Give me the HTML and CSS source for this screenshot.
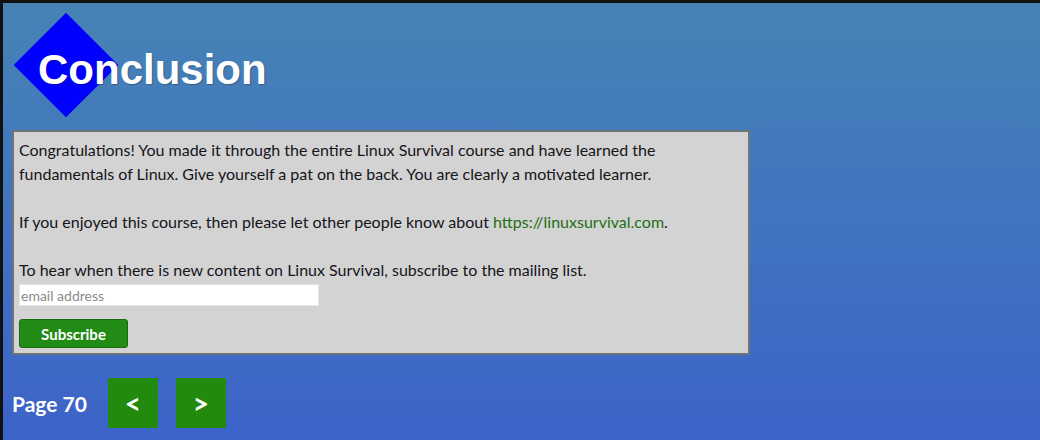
FILE: index.html
```html
<!DOCTYPE html>
<html>
<head>
<meta charset="utf-8">
<link rel="stylesheet" href="styles.css">
</head>
<body>
<div class="page">
  <header class="header">
    <h1 class="title">Conclusion</h1>
  </header>
  <section class="card">
    <p class="para">Congratulations! You made it through the entire Linux Survival course and have learned the fundamentals of Linux. Give yourself a pat on the back. You are clearly a motivated learner.</p>
    <p class="para">If you enjoyed this course, then please let other people know about <a class="link" href="#">https://linuxsurvival.com</a>.</p>
    <p class="para">To hear when there is new content on Linux Survival, subscribe to the mailing list.</p>
    <form class="signup">
      <input class="email" type="text" placeholder="email address">
      <button class="subscribe" type="button">Subscribe</button>
    </form>
  </section>
  <nav class="pager">
    <span class="pagenum">Page 70</span>
    <a class="navbtn" href="#">&lt;</a>
    <a class="navbtn" href="#">&gt;</a>
  </nav>
</div>
</body>
</html>
```
FILE: styles.css
```css
html, body {
  margin: 0;
  padding: 0;
  height: 100%;
}
body {
  background: #111;
  font-family: Lato, "Liberation Sans", sans-serif;
}
.page {
  box-sizing: border-box;
  margin-top: 3px;
  margin-left: 3px;
  height: 437px;
  background: linear-gradient(to bottom, #4683b5 0%, #3c63c9 100%);
  padding: 0 9px;
  display: flex;
  flex-direction: column;
}
.header {
  position: relative;
  height: 127px;
  display: flex;
  align-items: flex-start;
}
.header::before {
  content: "";
  position: absolute;
  left: 17px;
  top: 25px;
  width: 74px;
  height: 74px;
  background: #0000ff;
  transform: rotate(45deg);
}
.title {
  position: relative;
  margin: 0;
  padding: 46px 0 0 26px;
  font-family: "Liberation Sans", Arial, sans-serif;
  font-weight: bold;
  font-size: 42px;
  line-height: 1;
  color: #fff;
  text-shadow: 1px 1px 1px rgba(0,0,0,0.25);
}
.card {
  width: 738px;
  box-sizing: border-box;
  background: #d3d3d3;
  border: 2px solid #6e7478;
  padding: 6px 5px 4px 5px;
  color: #15151a;
  font-size: 16px;
  line-height: 24px;
}
.para {
  margin: 0 0 24px 0;
}
.para:nth-of-type(3) {
  margin-bottom: 0;
}
.link {
  color: #1f6f14;
  text-decoration: none;
}
.signup {
  display: flex;
  flex-direction: column;
  align-items: flex-start;
  gap: 13px;
  margin: 2px 0 0 0;
}
.email {
  width: 300px;
  height: 22px;
  box-sizing: border-box;
  border: 1px solid #e4e4e4;
  background: #fff;
  padding: 0 1px;
  font-family: Lato, sans-serif;
  font-size: 14px;
  margin: 0;
}
.email::placeholder {
  color: #8a8a8a;
}
.subscribe {
  width: 109px;
  height: 29px;
  background: #228b16;
  border: 1px solid #1a6a10;
  border-radius: 3px;
  color: #fff;
  font-family: Lato, sans-serif;
  font-weight: bold;
  font-size: 15px;
  padding: 0;
  margin-bottom: 1px;
}
.pager {
  display: flex;
  align-items: center;
  gap: 18px;
  margin-top: 23px;
}
.pagenum {
  color: #fff;
  font-weight: bold;
  font-size: 21px;
  margin-right: 3px;
}
.navbtn {
  width: 50px;
  height: 50px;
  background: #228b0e;
  color: #fff;
  font-weight: bold;
  font-size: 28px;
  text-decoration: none;
  display: flex;
  align-items: center;
  justify-content: center;
}
```
